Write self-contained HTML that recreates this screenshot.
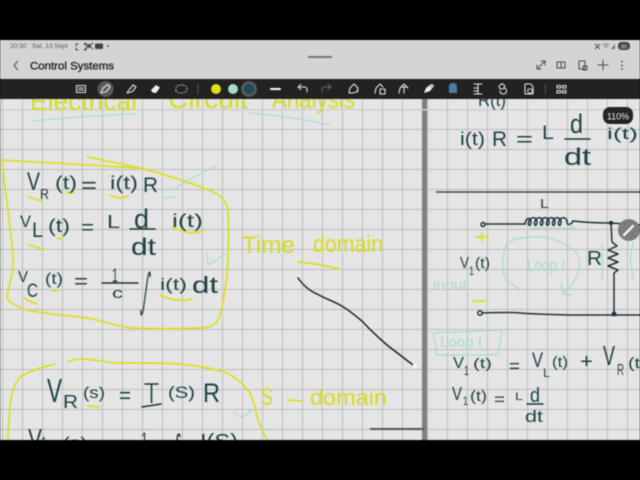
<!DOCTYPE html>
<html><head><meta charset="utf-8"><style>
html,body{margin:0;padding:0;background:#000;width:640px;height:480px;overflow:hidden}
svg{display:block;position:absolute;left:0;top:0;filter:blur(.45px)}
text{font-family:"Liberation Sans",sans-serif}
.h text{fill:#1f4145}
.y text{fill:#d6dc20}
.t text{fill:#a8dccb}
.ys{fill:none;stroke:#dcdf1e;stroke-width:1.7;stroke-linecap:round;stroke-linejoin:round}
.ts{fill:none;stroke:#a8dccb;stroke-width:1.2;stroke-linecap:round;stroke-linejoin:round}
.w{fill:none;stroke:#1c3338;stroke-width:1.5;stroke-linecap:round;stroke-linejoin:round}
.i{fill:none;stroke:#e4e4e4;stroke-width:1.1;stroke-linecap:round;stroke-linejoin:round}
.g{fill:none;stroke:#4a4a4a;stroke-width:1;stroke-linecap:round;stroke-linejoin:round}
</style></head><body>
<svg width="640" height="480" viewBox="0 0 640 480" xmlns="http://www.w3.org/2000/svg">
<defs>
<pattern id="gl" x="2" y="9" width="20" height="20" patternUnits="userSpaceOnUse"><path d="M0.5 0V20M0 .5H20" stroke="#bcbcbc" stroke-width="1" fill="none"/></pattern>
<pattern id="gr" x="7" y="9" width="20" height="20" patternUnits="userSpaceOnUse"><path d="M0.5 0V20M0 .5H20" stroke="#bcbcbc" stroke-width="1" fill="none"/></pattern>
</defs>
<rect width="640" height="480" fill="#000"/>
<rect y="99" width="640" height="341" fill="#e5e5e5"/>
<rect y="99" width="422" height="341" fill="url(#gl)"/>
<rect x="427" y="99" width="213" height="341" fill="url(#gr)"/>
<rect x="422" y="99" width="5" height="341" fill="#808080"/>
<rect y="109" width="640" height="1.5" fill="#cfcfcf"/>

<!-- heading -->
<g class="y" font-size="26">
<text x="30" y="110" textLength="107" lengthAdjust="spacingAndGlyphs">Electrical</text>
<text x="168" y="108" textLength="80" lengthAdjust="spacingAndGlyphs">Circuit</text>
<text x="272" y="108" textLength="83" lengthAdjust="spacingAndGlyphs">Analysis</text>
</g>
<path class="ts" d="M33 121Q80 116 135 114M250 113Q290 116 330 125"/>

<!-- yellow boxes -->
<path class="ys" d="M2 160C12 161 25 161 33 162C60 163 100 166 140 168C170 176 195 184 213 192C222 196 227 203 228 210C229 235 229 255 227 273C225 295 222 310 218 320C213 327 207 328 200 328C175 329 155 329 133 328C115 326 100 320 87 318C65 315 45 314 27 310C15 306 8 302 7 297C9 283 14 272 13 257C10 220 5 190 2 160Z"/>
<path class="ys" d="M88 157L140 168"/>
<path class="ys" d="M55 364C40 367 27 373 20 377C13 386 11 396 10 407C9 420 8 430 8 440M68 362C72 360 76 359 80 359C95 359 108 363 120 363C145 363 165 363 180 364C200 366 215 369 227 373C238 379 245 386 250 393C254 402 256 411 258 420C261 428 264 434 267 440"/>
<path class="ys" d="M29 197Q35 199 42 201M66 192Q70 194 74 192M110 195Q120 200 128 196M29 245Q37 248 44 249M58 238Q60 240 63 238M172 227Q190 236 203 231M24 298Q30 302 37 304M52 290Q55 292 58 290M160 295Q175 303 192 299M88 406L100 407"/>

<!-- left equations -->
<g class="h">
<text x="27" y="190" font-size="25" textLength="13" lengthAdjust="spacingAndGlyphs">V</text>
<text x="40" y="199" font-size="15" textLength="9" lengthAdjust="spacingAndGlyphs">R</text>
<text x="55" y="189" font-size="18" textLength="22" lengthAdjust="spacingAndGlyphs">(t)</text>
<text x="81" y="193" font-size="22" textLength="16" lengthAdjust="spacingAndGlyphs">=</text>
<text x="110" y="189" font-size="18" textLength="28" lengthAdjust="spacingAndGlyphs">i(t)</text>
<text x="143" y="192" font-size="21" textLength="15" lengthAdjust="spacingAndGlyphs">R</text>

<text x="20" y="227" font-size="17" textLength="11" lengthAdjust="spacingAndGlyphs">V</text>
<text x="32" y="237" font-size="21" textLength="11" lengthAdjust="spacingAndGlyphs">L</text>
<text x="48" y="232" font-size="18" textLength="22" lengthAdjust="spacingAndGlyphs">(t)</text>
<text x="81" y="234" font-size="20" textLength="13" lengthAdjust="spacingAndGlyphs">=</text>
<text x="107" y="228" font-size="18" textLength="13" lengthAdjust="spacingAndGlyphs">L</text>
<text x="134" y="228" font-size="27" textLength="15" lengthAdjust="spacingAndGlyphs">d</text>
<text x="131" y="255" font-size="24" textLength="25" lengthAdjust="spacingAndGlyphs">dt</text>
<text x="172" y="227" font-size="18" textLength="31" lengthAdjust="spacingAndGlyphs">i(t)</text>

<text x="18" y="282" font-size="16" textLength="10" lengthAdjust="spacingAndGlyphs">V</text>
<text x="27" y="297" font-size="19" textLength="11" lengthAdjust="spacingAndGlyphs">C</text>
<text x="45" y="284" font-size="16" textLength="18" lengthAdjust="spacingAndGlyphs">(t)</text>
<text x="74" y="288" font-size="20" textLength="14" lengthAdjust="spacingAndGlyphs">=</text>
<text x="112" y="282" font-size="19" textLength="6" lengthAdjust="spacingAndGlyphs">1</text>
<text x="112" y="298" font-size="15" textLength="11" lengthAdjust="spacingAndGlyphs">c</text>
<text transform="translate(140 306) skewX(-7)" font-size="46" textLength="8" lengthAdjust="spacingAndGlyphs" style="font-family:'DejaVu Sans',sans-serif">∫</text>
<text x="160" y="290" font-size="17" textLength="27" lengthAdjust="spacingAndGlyphs">i(t)</text>
<text x="192" y="293" font-size="23" textLength="26" lengthAdjust="spacingAndGlyphs">dt</text>

<text x="47" y="402" font-size="33" textLength="15" lengthAdjust="spacingAndGlyphs">V</text>
<text x="63" y="408" font-size="18" textLength="15" lengthAdjust="spacingAndGlyphs">R</text>
<text x="83" y="398" font-size="16" textLength="22" lengthAdjust="spacingAndGlyphs">(s)</text>
<text x="119" y="403" font-size="22" textLength="12" lengthAdjust="spacingAndGlyphs">=</text>
<text x="149" y="403" font-size="28" textLength="5" lengthAdjust="spacingAndGlyphs">I</text>
<text x="168" y="398" font-size="17" textLength="27" lengthAdjust="spacingAndGlyphs">(S)</text>
<text x="203" y="402" font-size="27" textLength="17" lengthAdjust="spacingAndGlyphs">R</text>
<text x="28" y="448" font-size="28" textLength="14" lengthAdjust="spacingAndGlyphs">V</text>
<text x="41" y="448" font-size="16" textLength="6" lengthAdjust="spacingAndGlyphs">1</text>
<text x="63" y="448" font-size="16" textLength="24" lengthAdjust="spacingAndGlyphs">(s)</text>
<text x="141" y="448" font-size="22" textLength="7" lengthAdjust="spacingAndGlyphs">1</text>
<text x="172" y="456" font-size="30" textLength="10" lengthAdjust="spacingAndGlyphs" style="font-family:'DejaVu Sans',sans-serif">∫</text>
<text x="200" y="448" font-size="20" textLength="38" lengthAdjust="spacingAndGlyphs">I(S)</text>
</g>
<path class="w" stroke-width="1.2" d="M130 229H155M102 283H138M142 407L161 404M145 384H158M527 404H543M565 139H590"/>

<!-- teal ticks -->
<path class="ts" d="M218 165Q195 175 173 190M162 192L163 198L175 197M207 253L208 265L227 253M233 412L242 418L252 410"/>

<!-- side yellow labels -->
<g class="y">
<text x="242" y="253" font-size="24" textLength="53" lengthAdjust="spacingAndGlyphs">Time</text>
<text x="313" y="252" font-size="24" textLength="70" lengthAdjust="spacingAndGlyphs">domain</text>
<text x="261" y="405" font-size="24" textLength="12" lengthAdjust="spacingAndGlyphs">S</text>
<text x="310" y="405" font-size="22" textLength="77" lengthAdjust="spacingAndGlyphs">domain</text>
</g>
<path class="ys" d="M298 262Q320 264 340 269M288 400L302 401"/>

<!-- black curve -->
<path d="M298 278C303 285 310 291 317 294C326 299 333 301 340 305C349 310 356 316 363 322C371 331 379 338 387 345L413 365" fill="none" stroke="#1a2226" stroke-width="1.5" stroke-linecap="round"/>
<circle cx="415" cy="366" r="2.5" fill="#f4f4f4"/>
<path d="M370 429H424" stroke="#555" stroke-width="2"/>

<!-- right page -->
<path d="M436 192H640" stroke="#454545" stroke-width="1.6"/>
<g class="h">
<text x="478" y="106" font-size="18" textLength="28" lengthAdjust="spacingAndGlyphs">R(t)</text>
<text x="460" y="145" font-size="18" textLength="25" lengthAdjust="spacingAndGlyphs">i(t)</text>
<text x="492" y="146" font-size="21" textLength="15" lengthAdjust="spacingAndGlyphs">R</text>
<text x="516" y="146" font-size="20" textLength="17" lengthAdjust="spacingAndGlyphs">=</text>
<text x="542" y="139" font-size="19" textLength="12" lengthAdjust="spacingAndGlyphs">L</text>
<text x="570" y="133" font-size="27" textLength="13" lengthAdjust="spacingAndGlyphs">d</text>
<text x="564" y="165" font-size="24" textLength="27" lengthAdjust="spacingAndGlyphs">dt</text>
<text x="607" y="139" font-size="16" textLength="31" lengthAdjust="spacingAndGlyphs">i(t)</text>
<text x="540" y="208" font-size="13" textLength="9" lengthAdjust="spacingAndGlyphs">L</text>

<text x="460" y="268" font-size="16" textLength="9" lengthAdjust="spacingAndGlyphs">V</text>
<text x="469" y="275" font-size="12" textLength="5" lengthAdjust="spacingAndGlyphs">1</text>
<text x="475" y="268" font-size="15" textLength="15" lengthAdjust="spacingAndGlyphs">(t)</text>
<text x="587" y="265" font-size="20" textLength="15" lengthAdjust="spacingAndGlyphs">R</text>

<text x="453" y="368" font-size="16" textLength="11" lengthAdjust="spacingAndGlyphs">V</text>
<text x="464" y="375" font-size="13" textLength="5" lengthAdjust="spacingAndGlyphs">1</text>
<text x="473" y="368" font-size="14" textLength="19" lengthAdjust="spacingAndGlyphs">(t)</text>
<text x="509" y="372" font-size="18" textLength="11" lengthAdjust="spacingAndGlyphs">=</text>
<text x="532" y="367" font-size="21" textLength="11" lengthAdjust="spacingAndGlyphs">V</text>
<text x="543" y="377" font-size="12" textLength="7" lengthAdjust="spacingAndGlyphs">L</text>
<text x="552" y="367" font-size="15" textLength="16" lengthAdjust="spacingAndGlyphs">(t)</text>
<text x="580" y="368" font-size="20" textLength="13" lengthAdjust="spacingAndGlyphs">+</text>
<text x="603" y="365" font-size="28" textLength="12" lengthAdjust="spacingAndGlyphs">V</text>
<text x="617" y="375" font-size="16" textLength="7" lengthAdjust="spacingAndGlyphs">R</text>
<text x="628" y="368" font-size="15" textLength="12" lengthAdjust="spacingAndGlyphs">(t</text>

<text x="452" y="400" font-size="18" textLength="10" lengthAdjust="spacingAndGlyphs">V</text>
<text x="463" y="405" font-size="12" textLength="5" lengthAdjust="spacingAndGlyphs">1</text>
<text x="470" y="401" font-size="15" textLength="17" lengthAdjust="spacingAndGlyphs">(t)</text>
<text x="494" y="405" font-size="17" textLength="11" lengthAdjust="spacingAndGlyphs">=</text>
<text x="515" y="400" font-size="11" textLength="8" lengthAdjust="spacingAndGlyphs">L</text>
<text x="530" y="402" font-size="20" textLength="10" lengthAdjust="spacingAndGlyphs">d</text>
<text x="525" y="422" font-size="17" textLength="18" lengthAdjust="spacingAndGlyphs">dt</text>
</g>

<!-- circuit -->
<circle cx="483" cy="224.5" r="2" fill="none" stroke="#1c3338" stroke-width="1.5"/>
<circle cx="480" cy="313" r="2.2" fill="none" stroke="#1c3338" stroke-width="1.5"/>
<path class="w" d="M485 224L525 224M573 221Q590 223 611 223L640 225"/>
<path class="w" stroke-width="1.2" d="M525 224C526 217 531 217 531 222C531 227 527 226 529 221C531 216 537 217 537 222C537 227 533 226 535 221C537 216 543 217 543 222C543 227 539 226 541 221C543 216 549 217 549 222C549 227 545 226 547 221C549 216 555 217 555 222C555 227 551 226 553 221C555 216 561 217 561 222C561 227 557 226 559 221C561 216 567 217 567 222C567 226 571 225 573 221"/>
<path class="w" d="M611 223L612 242L617 246L608 250L618 254L608 258L618 262L608 266L618 270L614 273L614 313"/>
<path class="w" d="M482 313Q510 312 520 313T570 315L640 315"/>
<circle cx="611" cy="223" r="2.2" fill="#1c3338"/>
<circle cx="614" cy="314" r="2.4" fill="#1c3338"/>
<path class="ys" d="M476 237H488M482 233V241M473 301H485"/>
<g class="t">
<text x="433" y="289" font-size="13" textLength="34" lengthAdjust="spacingAndGlyphs">input</text>
<text x="527" y="271" font-size="17" textLength="38" lengthAdjust="spacingAndGlyphs">Loop I</text>
<text x="440" y="347" font-size="15" textLength="42" lengthAdjust="spacingAndGlyphs">Loop I</text>
</g>
<path class="ts" d="M522 290C510 284 503 278 503 270C502 257 504 249 507 243C515 238 528 236 540 237C555 238 568 245 577 253C580 260 580 267 578 273C575 282 570 288 563 293M561 283L563 294L572 295M530 228H575L570 225M602 243V280M633 243Q628 260 634 280M433 333L502 330L498 355L437 355Z"/>

<!-- badge + fab -->
<rect x="603" y="107" width="30" height="17" rx="7" fill="#242424"/>
<text x="618" y="119.500" font-size="9" text-anchor="middle" fill="#f0f0f0">110%</text>
<circle cx="629" cy="230" r="11" fill="#7d7d7d"/>
<path d="M624 235L633 226" stroke="#fff" stroke-width="2.200" stroke-linecap="round"/>

<!-- header -->
<rect y="40" width="640" height="39" fill="#d4d4d4"/>
<text x="10" y="48" font-size="6.500" fill="#5c5c5c">20:30</text>
<text x="32" y="48" font-size="6.500" fill="#5c5c5c">Sat, 13 Sept</text>
<path class="g" d="M76 44H78M84 44H86M76 50H78M84 50H86M76 44V46M86 44V46M76 48V50M86 48V50" stroke-width=".8"/>
<circle cx="89" cy="46" r="2" fill="#555"/><path class="g" d="M85 43L93 49M93 43L85 49" stroke-width=".8"/>
<rect x="95" y="43.500" width="8" height="5.500" rx="1" fill="#444"/>
<circle cx="108" cy="46" r="1" fill="#555"/>
<path d="M595 44L600 49M600 44L595 49" stroke="#555" stroke-width="1.200"/>
<path d="M603 45Q606 43 609 45M604 47Q606 46 608 47" stroke="#777" stroke-width=".9" fill="none"/>
<path d="M611 49L615 49L615 44Z" fill="#777"/>
<rect x="618" y="42" width="12" height="8" rx="3.500" fill="#444"/>
<text x="624" y="48.500" font-size="5.500" text-anchor="middle" fill="#ddd">80</text>
<path d="M18 61L14 65.500L18 70" fill="none" stroke="#555" stroke-width="1.100"/>
<text x="30" y="69.500" font-size="11.300" fill="#1c1c1c" stroke="#1c1c1c" stroke-width=".3" textLength="84" lengthAdjust="spacingAndGlyphs">Control Systems</text>
<rect x="308" y="56" width="24" height="2" fill="#777"/>
<path class="g" d="M537 69L545 61M541 61H545V65M537 65V69H541"/>
<path class="g" d="M557 62H565V68H557ZM561 62V68"/>
<path class="g" d="M579 61H585V69H579ZM583 66H587V70H583Z"/>
<path class="g" d="M603 60V70M598 65H608" stroke="#777"/>
<circle cx="622" cy="61.500" r=".9" fill="#444"/><circle cx="622" cy="65.500" r=".9" fill="#444"/><circle cx="622" cy="69" r=".9" fill="#444"/>

<!-- toolbar -->
<rect y="79" width="640" height="20" fill="#222"/>
<path class="i" d="M76.500 85.500H85.500V92.500H76.500ZM78.500 88H83.500M78.500 90H83.500"/>
<circle cx="105.500" cy="89" r="8" fill="#5a5a5a"/>
<path class="i" d="M101 93L103 88L108 84.500L110 86.500L106.500 91.500Z"/>
<path class="i" d="M127 93L129 90L133 85L136 87L132.500 91.500L129.500 92.500Z"/>
<path d="M151 90L156 85L160 87.500L156 93L152.500 92.500Z" fill="#eee"/>
<path d="M176 91Q175 86 180 85Q186 84 187 89Q187 93 181 93Q177 93 176 91Z" fill="none" stroke="#ccc" stroke-width="1" stroke-dasharray="1.500 1.200"/>
<rect x="197.500" y="84" width="1" height="10" fill="#555"/>
<circle cx="216" cy="89" r="5" fill="#e0de14"/>
<circle cx="233" cy="89" r="5" fill="#a5dccb"/>
<circle cx="249" cy="89" r="8" fill="#55595b"/>
<circle cx="249" cy="89" r="5" fill="#1d4b5a"/>
<rect x="270" y="88" width="11" height="2" rx="1" fill="#fff"/>
<path class="i" d="M298 87H305Q307 87 307 90V92M298 87L301 84.500M298 87L301 89.500" stroke="#bbb"/>
<path class="i" d="M331 87H324Q322 87 322 90V92M331 87L328 84.500M331 87L328 89.500" style="stroke:#666"/>
<path class="i" d="M349 93L350 88L354 84L358 88L357 92L352 93ZM357 90L358 91"/>
<path class="i" d="M375 93L376 88L380 84L383 87M380 89H385V94H380Z"/>
<path class="i" d="M399 93L400 88L404 84L408 88M404 93V87M401 87H407"/>
<path d="M424 93L426 88L431 84L434 86L430 91Z" fill="#eee"/><path d="M429 86L433 84L434 86L431 89Z" fill="#a8dc8b"/>
<path d="M449 93V87Q449 83 453 83Q457 83 457 87V93Z" fill="#4a7fa5"/>
<path class="i" d="M474 84H482M478 84V94M474 94H482M474 88H477M474 91H477" />
<path class="i" d="M499 86L502 83.500L505 86L503 89L500 89ZM504 88A3 3 0 1 1 503 94A3 3 0 0 1 500 91"/>
<path class="i" d="M525 84H531L533 87V94H525Z"/><circle cx="530" cy="91" r="2.300" fill="none" stroke="#e4e4e4"/>
<rect x="545" y="84" width="1" height="10" fill="#555"/>
<path class="i" d="M557 85.500H560.500V88H557ZM562.500 85.500H566V88H562.500ZM557 90.500H560.500V93H557ZM562.500 90.500H566V93H562.500Z"/>

<rect y="0" width="640" height="40" fill="#000"/>
<rect y="440" width="640" height="40" fill="#000"/>
</svg>
</body></html>
